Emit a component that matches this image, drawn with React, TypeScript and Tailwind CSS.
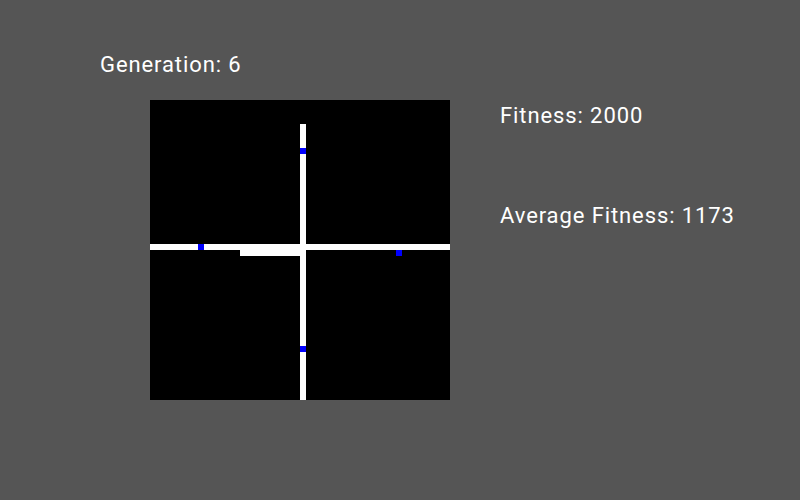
const CELL = 6;

// [col, row, color]
const cells: [number, number, string][] = [];
for (let r = 4; r < 50; r++) cells.push([25, r, "#ffffff"]);
for (let c = 0; c < 50; c++) cells.push([c, 24, "#ffffff"]);
for (let c = 15; c < 25; c++) cells.push([c, 25, "#ffffff"]);
const food: [number, number][] = [
  [25, 8],
  [8, 24],
  [41, 25],
  [25, 41],
];

function Board() {
  return (
    <svg width={300} height={300} className="block bg-black">
      {cells.map(([c, r, fill], i) => (
        <rect key={i} x={c * CELL} y={r * CELL} width={CELL} height={CELL} fill={fill} />
      ))}
      {food.map(([c, r], i) => (
        <rect key={"f" + i} x={c * CELL} y={r * CELL} width={CELL} height={CELL} fill="#0000ff" />
      ))}
    </svg>
  );
}

export default function App() {
  return (
    <div
      className="w-[800px] h-[500px] bg-[#555555] text-white flex pt-[54px] pl-[100px]"
      style={{ fontFamily: "Roboto, 'Liberation Sans', sans-serif" }}
    >
      <div className="flex flex-col">
        <p className="text-[22px] leading-[22px] tracking-[0.9px] whitespace-nowrap">Generation: 6</p>
        <div className="mt-[24px] ml-[50px]">
          <Board />
        </div>
      </div>
      <div className="flex flex-col ml-[50px] pt-[51px]">
        <p className="text-[22px] leading-[22px] tracking-[0.9px] whitespace-nowrap">Fitness: 2000</p>
        <p className="text-[22px] leading-[22px] tracking-[0.9px] whitespace-nowrap mt-[78px]">
          Average Fitness: 1173
        </p>
      </div>
    </div>
  );
}
